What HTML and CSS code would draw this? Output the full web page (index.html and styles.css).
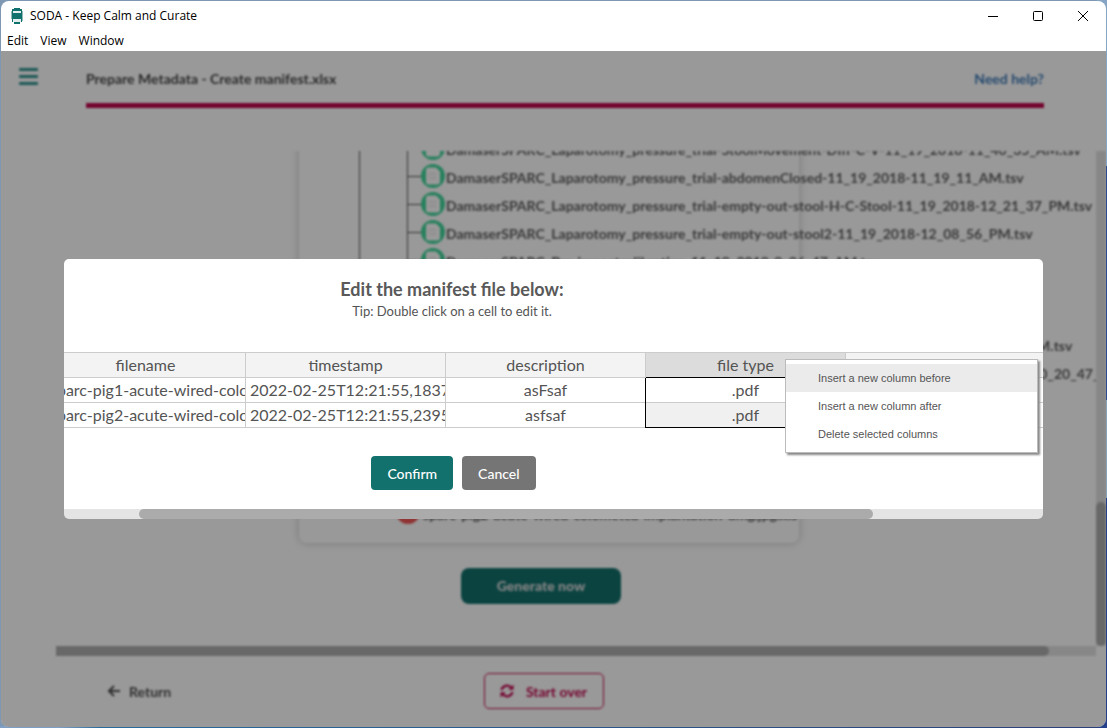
FILE: index.html
```html
<!DOCTYPE html>
<html lang="en">
<head>
<meta charset="utf-8">
<title>SODA - Keep Calm and Curate</title>
<link rel="stylesheet" href="styles.css">
</head>
<body>
<svg class="sprite" aria-hidden="true">
  <symbol id="file-icon" viewBox="0 0 24 24">
    <circle cx="12" cy="12" r="12" fill="#42d69c"/>
    <path d="M7.500 3.500h7.500l4 4v10q0 3-3 3h-8.500q-2.500 0-2.500-2.500v-12q0-2.500 2.500-2.500z" fill="#fff"/>
    <path d="M8 10h7M8 14h7" stroke="#ddd" stroke-width="1"/>
  </symbol>
</svg>
<div class="window">
  <header class="titlebar">
    <svg class="logo" viewBox="0 0 12 16" aria-hidden="true">
      <path d="M1 1h10v13h-2v2h-6v-2h-2z" fill="#11716c"/>
      <path d="M3 .5h6" stroke="#11716c"/>
      <path d="M2 3h8v2h-8zM2 11h8v3h-8z" fill="#e4eeee"/>
      <path d="M0 3h1v8h-1zM11 3h1v10h-1z" fill="#8fbab8"/>
    </svg>
    <span class="window-title">SODA - Keep Calm and Curate</span>
    <div class="window-controls">
      <button type="button" aria-label="Minimize"><svg viewBox="0 0 12 12"><path d="M1 6.500h10"/></svg></button>
      <button type="button" aria-label="Maximize"><svg viewBox="0 0 12 12"><rect x="1.500" y="1.500" width="9" height="9" rx="1"/></svg></button>
      <button type="button" aria-label="Close"><svg viewBox="0 0 12 12"><path d="M1 1l10 10M11 1L1 11"/></svg></button>
    </div>
  </header>
  <nav class="menubar">
    <button type="button">Edit</button>
    <button type="button">View</button>
    <button type="button">Window</button>
  </nav>
  <div class="app">
    <div class="page">
      <aside class="rail">
        <button type="button" class="hamburger" aria-label="Menu"><span></span><span></span><span></span></button>
      </aside>
      <main class="main">
        <div class="page-head">
          <h1>Prepare Metadata - Create manifest.xlsx</h1>
          <a href="#help">Need help?</a>
        </div>
        <div class="scroller">
          <div class="viewport">
            <div class="preview">
              <div class="branch">
                <ul class="files">
                  <li><svg><use href="#file-icon"/></svg><span>DamaserSPARC_Laparotomy_pressure_trial-StoolMovement-DIff-C-V-11_19_2018-11_40_35_AM.tsv</span></li>
                  <li><svg><use href="#file-icon"/></svg><span>DamaserSPARC_Laparotomy_pressure_trial-abdomenClosed-11_19_2018-11_19_11_AM.tsv</span></li>
                  <li><svg><use href="#file-icon"/></svg><span>DamaserSPARC_Laparotomy_pressure_trial-empty-out-stool-H-C-Stool-11_19_2018-12_21_37_PM.tsv</span></li>
                  <li><svg><use href="#file-icon"/></svg><span>DamaserSPARC_Laparotomy_pressure_trial-empty-out-stool2-11_19_2018-12_08_56_PM.tsv</span></li>
                  <li><svg><use href="#file-icon"/></svg><span>DamaserSPARC_Pre-impactcalibration-11_19_2018-9_26_47_AM.tsv</span></li>
                  <li></li>
                  <li></li>
                  <li><svg><use href="#file-icon"/></svg><span>DamaserSPARC_Laparotomy_pressure_trial-stool-movement-full-2b-11_19_2018-11_52_16_AM.tsv</span></li>
                  <li><svg><use href="#file-icon"/></svg><span>DamaserSPARC_Laparotomy_pressure_trial-stool-movement-full-2-abdomen-in-11_19_2018-10_20_47_AM.tsv</span></li>
                  <li></li>
                  <li></li>
                  <li></li>
                  <li></li>
                </ul>
              </div>
              <div class="folder-file">
                <svg viewBox="0 0 24 24"><circle cx="12" cy="12" r="12" fill="#f05454"/><path d="M6 4h12v12h-12z" fill="#fff"/><path d="M7 17h10" stroke="#fff"/></svg>
                <span>sparc-pig2-acute-wired-colometcd-implantation-dmg.jpg.xls</span>
              </div>
            </div>
            <button type="button" class="generate">Generate now</button>
          </div>
          <div class="vbar"><div></div></div>
          <div class="hbar"><div></div></div>
        </div>
        <div class="page-foot">
          <button type="button" class="return">
            <svg viewBox="0 0 14 14"><path d="M13 7H2M7 2L2 7l5 5" fill="none" stroke="currentColor" stroke-width="2"/></svg>
            Return
          </button>
          <button type="button" class="restart">
            <svg viewBox="0 0 14 14"><path d="M1.500 6A5.600 5.600 0 0 1 11 3.500M12.500 8A5.600 5.600 0 0 1 3 10.500" fill="none" stroke="currentColor" stroke-width="2.200"/><path d="M13.500 .5v5.200H8.300zM.5 13.500V8.300h5.200z" fill="currentColor"/></svg>
            Start over
          </button>
        </div>
      </main>
    </div>
    <div class="backdrop">
      <section class="modal" role="dialog" aria-labelledby="modal-title">
        <div class="modal-content">
          <h2 id="modal-title">Edit the manifest file below:</h2>
          <p>Tip: Double click on a cell to edit it.</p>
          <table>
            <colgroup><col><col><col><col><col></colgroup>
            <thead><tr><th>filename</th><th>timestamp</th><th>description</th><th class="picked">file type</th><th></th></tr></thead>
            <tbody>
              <tr><td>sparc-pig1-acute-wired-colonic</td><td>2022-02-25T12:21:55,183729</td><td>asFsaf</td><td class="cell-first">.pdf</td><td></td></tr>
              <tr><td>sparc-pig2-acute-wired-colonic</td><td>2022-02-25T12:21:55,239541</td><td>asfsaf</td><td class="cell-last">.pdf</td><td></td></tr>
            </tbody>
          </table>
          <div class="actions">
            <button type="button" class="confirm">Confirm</button>
            <button type="button" class="cancel">Cancel</button>
          </div>
        </div>
        <div class="modal-bar"><div></div></div>
        <div class="context-menu" role="menu">
          <button type="button" role="menuitem" class="active">Insert a new column before</button>
          <button type="button" role="menuitem">Insert a new column after</button>
          <button type="button" role="menuitem">Delete selected columns</button>
        </div>
      </section>
    </div>
  </div>
</div>
</body>
</html>
```
FILE: styles.css
```css
* { box-sizing: border-box; }
body {
  margin: 0;
  height: 100vh;
  padding: 1px;
  background:
    linear-gradient(#86a4c4 0 166px, #2c4a90 166px 400px, #86a0b8 400px 498px, #24408a 498px) right / 10px 100% no-repeat,
    linear-gradient(90deg, #7f9fc4 60px, #2a6c9c 100px, #2c3f78) bottom / 100% 2px no-repeat,
    #7e98b4;
  font-family: Lato, sans-serif;
  font-size: 14px;
}
button { font: inherit; border: 0; background: none; padding: 0; margin: 0; }
h1, h2, p, ul { margin: 0; padding: 0; }
.sprite { display: none; }
.window {
  display: flex;
  flex-direction: column;
  height: 100%;
  border-radius: 8px;
  overflow: hidden;
  background: #fff;
}

/* Window frame */
.titlebar, .menubar { display: flex; align-items: center; font-family: "Open Sans", sans-serif; font-size: 12px; color: #000; }
.titlebar { height: 29px; padding: 0 1px 0 10px; }
.logo { width: 12px; height: 16px; margin-right: 7px; }
.window-controls { display: flex; margin-left: auto; }
.window-controls button { width: 45px; height: 28px; display: grid; place-items: center; }
.window-controls svg { width: 12px; height: 12px; fill: none; stroke: #000; stroke-width: 1; }
.menubar { height: 21px; padding-left: 6px; gap: 12px; }

/* Application page */
.app { position: relative; flex: 1; min-height: 0; overflow: hidden; }
.page { display: flex; height: 100%; filter: blur(1px); }
.rail { width: 55px; padding: 17px 0 0 18px; }
.hamburger { display: flex; flex-direction: column; gap: 4px; width: 19px; }
.hamburger span { height: 3px; border-radius: 1px; background: #2f938e; }
.main { display: flex; flex-direction: column; flex: 1; min-width: 0; }
.page-head {
  display: flex;
  justify-content: space-between;
  align-items: center;
  height: 57px;
  margin: 0 62px 43px 30px;
  border-bottom: 5px solid #c2084e;
  padding-top: 2px;
}
.page-head h1 { font-size: 14px; font-weight: 700; color: #484848; }
.page-head a { color: #3f7bb8; font-weight: 700; text-decoration: none; }
.scroller { flex: 1; min-height: 0; display: grid; grid-template: minmax(0, 1fr) 10px / minmax(0, 1fr) 10px; }
.viewport {
  display: flex;
  flex-direction: column;
  justify-content: flex-end;
  align-items: center;
  overflow: hidden;
  padding: 0 70px 42px 0;
}
.preview {
  flex: none;
  width: 500px;
  margin: 0 0 25px 16px;
  padding: 0 0 15px 60px;
  border-radius: 8px;
  box-shadow: 0 0 8px rgba(0, 0, 0, .22);
  font-weight: 700;
  color: #606060;
  white-space: nowrap;
}
.branch { border-left: 1px solid #555; padding-left: 47px; }
.files { list-style: none; border-left: 1px solid #555; }
.files li, .folder-file { display: flex; align-items: center; height: 28px; }
.files li::before { content: ""; width: 13px; height: 1px; margin-bottom: 4px; background: #555; flex: none; }
.files svg, .folder-file svg { width: 24px; height: 24px; flex: none; margin-bottom: 4px; }
.files span { margin: 0 0 2px 1px; }
.folder-file { padding-left: 37px; gap: 3px; }
.generate {
  flex: none;
  width: 160px;
  height: 36px;
  padding-bottom: 2px;
  border-radius: 8px;
  background: #13716d;
  color: #ddd;
  font-weight: 900;
}
.vbar { background: #e2e2e2; display: flex; align-items: flex-end; }
.vbar div { width: 10px; height: 29%; border-radius: 5px; background: #adadad; }
.hbar { background: #e2e2e2; }
.hbar div { width: 95.500%; height: 10px; border-radius: 0 5px 5px 0; background: #adadad; }
.page-foot {
  display: grid;
  grid-template-columns: 1fr auto 1fr;
  align-items: center;
  height: 71px;
  padding: 0 126px 1px 51px;
  font-weight: 700;
}
.page-foot button { display: flex; align-items: center; }
.page-foot svg { width: 14px; height: 14px; }
.return { gap: 8px; color: #505050; }
.restart { justify-content: center; gap: 12px; width: 120px; height: 36px; border: 1px solid #c2084e; border-radius: 5px; color: #c2084e; }

/* Manifest dialog */
.backdrop {
  position: absolute;
  inset: 0;
  display: flex;
  align-items: center;
  padding: 0 63px;
  background: rgba(0, 0, 0, .4);
}
.modal { position: relative; width: 100%; border-radius: 5px; color: #545454; }
.modal-content, .modal-bar { background: #fff; }
.modal-content {
  overflow: hidden;
  border-radius: 5px 5px 0 0;
  padding: 19px 0;
  text-align: center;
}
.modal-content > * { position: relative; left: -100px; }
.modal h2, .modal p { padding-right: 3px; line-height: 22px; }
.modal h2 { font-size: 18px; font-weight: 700; color: #595959; }
.modal p { font-size: 13px; }
.modal table {
  width: 1000px;
  margin: 30px 0 28px 82px;
  table-layout: fixed;
  border-collapse: separate;
  border-spacing: 0;
  border-top: 1px solid #ccc;
  font-size: 16px;
}
.modal th, .modal td {
  height: 25px;
  padding: 0 4px;
  line-height: 24px;
  border-right: 1px solid #ccc;
  border-bottom: 1px solid #ccc;
  overflow: hidden;
  white-space: nowrap;
  font-weight: 400;
}
.modal th { background: #f3f3f3; }
.modal th.picked { background: #dcdcdc; border-bottom-color: #000; }
.modal .cell-first, .modal .cell-last { box-shadow: -1px 0 #000; }
.modal .cell-last { background: #f0f0f0; border-bottom-color: #000; }
.actions { display: flex; justify-content: center; gap: 9px; }
.actions button { height: 34px; padding: 0 16px; border-radius: 4px; color: #fff; font-weight: 500; }
.confirm { background: #13716d; }
.cancel { background: #757575; }
.modal-bar { height: 10px; border-radius: 0 0 5px 5px; background: #e4e4e4; }
.modal-bar div { width: 75%; height: 10px; margin-left: 75px; border-radius: 5px; background: #ababab; }
.context-menu {
  position: absolute;
  top: 100px;
  right: 5px;
  width: 253px;
  padding: 4px 0;
  border: 1px solid #bbb;
  background: #fff;
  box-shadow: 2px 2px 2px #888;
}
.context-menu button {
  display: block;
  width: 100%;
  height: 28px;
  padding-left: 32px;
  text-align: left;
  font-family: "Liberation Sans", Arial, sans-serif;
  font-size: 11px;
  color: #555;
}
.context-menu .active { background: #ebebeb; }
```
